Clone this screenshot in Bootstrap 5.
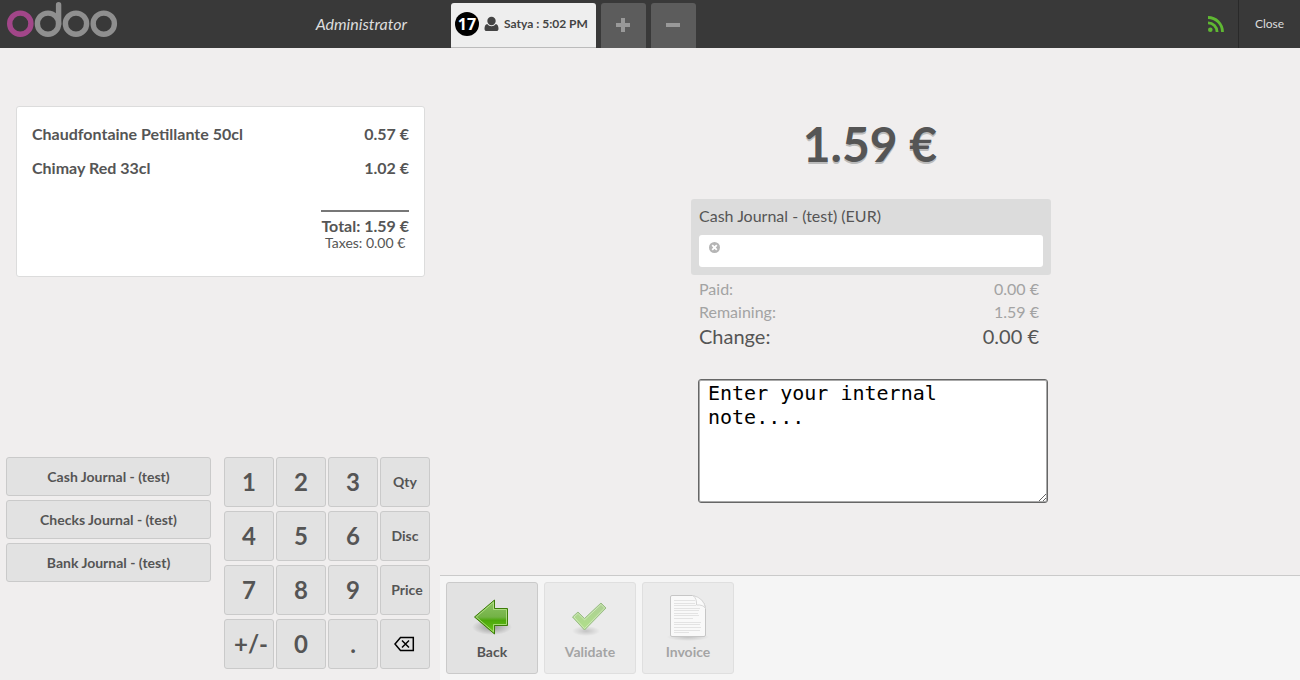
<!DOCTYPE html>
<html lang="en">
<head>
<meta charset="utf-8">
<meta name="viewport" content="width=device-width, initial-scale=1">
<title>Odoo Point of Sale</title>
<link href="https://cdn.jsdelivr.net/npm/bootstrap@5.3.0/dist/css/bootstrap.min.css" rel="stylesheet">
<style>
body { font-family: Lato, "Liberation Sans", sans-serif; font-size: 16px; line-height: 20px; color: #555; background: #f0eeee; }
.topbar { height: 48px; background: #393939; color: #eee; }
.left-col { width: 440px; }
.user-name { font-size: 16px; font-style: italic; padding-right: 33px; color: #ddd; }
.orders { padding-left: 11px; }
.order-tab { height: 45px; background: #eee; color: #444; border: 0; border-bottom: 1px solid #bbb; border-radius: 3px 3px 0 0; font-size: 12px; font-weight: 700; padding: 0 8px 2px 4px; }
.order-num { width: 24px; height: 24px; border-radius: 50%; background: #000; color: #fff; font: 700 16px/24px "Open Sans", sans-serif; text-align: center; }
.order-ctl { width: 45px; height: 45px; background: #5c5c5c; border: 0; border-radius: 3px 3px 0 0; padding: 0 0 5px; margin-left: 5px; }
.close-btn { width: 62px; height: 48px; background: none; border: 0; border-left: 1px solid #292929; color: #ddd; font-size: 12px; }
.status { margin-right: 14px; }
.receipt { margin: 58px 15px 0 16px; padding: 16px 15px 26px; background: #fff; border: 1px solid #dcdcdc; border-radius: 3px; font-weight: 700; }
.receipt-line { height: 34px; padding-top: 1px; }
.receipt-sum { border-top: 2px solid #777; margin-top: 19px; padding-top: 4px; line-height: 20px; }
.receipt-tax { font-size: 14px; font-weight: 400; line-height: 14px; }
.action-pad { padding: 0 10px 11px 6px; }
.pad-btn { background: #e2e2e2; border: 1px solid #cacaca; border-radius: 3px; color: #555; font-weight: 700; font-size: 14px; line-height: 20px; padding: 0; white-space: nowrap; }
.journals { width: 205px; }
.journals .pad-btn { height: 39px; }
.keypad { display: grid; grid-template-columns: repeat(4, 50px); column-gap: 2px; row-gap: 4px; }
.keypad .pad-btn { height: 50px; }
.keypad .digit { font-size: 24px; }
.keypad .wide-key { padding-left: 4px; }
.due { font-size: 48px; line-height: 60px; font-weight: 700; text-shadow: 0 2px 0 #bbb; padding: 66px 0 25px; }
.pay-col { width: 360px; margin-left: 251px; }
.pay-line { background: #dcdcdc; border-radius: 3px; padding: 7px 8px 8px; }
.pay-box { background: #fff; border-radius: 3px; height: 32px; margin-top: 9px; padding: 0 10px; }
.pay-box button { border: 0; background: none; padding: 7px 0 0; line-height: 0; }
.pay-box input { border: 0; outline: 0; background: none; text-align: right; }
.totals { padding: 2px 12px 0 8px; color: #a3a3a3; line-height: 23px; }
.totals .change { font-size: 20px; line-height: 26px; color: #555; }
.note { width: 350px; height: 124px; margin: 30px 0 0 7px; padding: 1px 9px; border: 1px solid #666; border-radius: 3px; box-shadow: inset 0 0 0 1px #aaa; font: 20px/24px "DejaVu Sans Mono", monospace; color: #000; background: #fff; }
.action-bar { background: #f5f5f5; border-top: 1px solid #cacaca; padding: 6px; gap: 6px; }
.action-bar .pad-btn { width: 92px; height: 92px; padding-bottom: 5px; }
.action-bar .pad-btn:disabled { opacity: .5; }
</style>
</head>
<body class="vh-100 d-flex flex-column">
<header class="topbar d-flex flex-shrink-0">
  <div class="left-col d-flex justify-content-between align-items-center flex-shrink-0">
    <svg class="align-self-start" width="120" height="44" viewBox="0 0 120 44" fill="none" stroke-width="5.4" role="img" aria-label="odoo">
      <circle cx="20.300" cy="23.700" r="10.600" stroke="#a24689"/>
      <g stroke="#8f8f8f"><circle cx="48" cy="23.700" r="10.600"/><path d="M58.600 24V4.700" stroke-linecap="round"/><circle cx="76" cy="23.700" r="10.600"/><circle cx="103.800" cy="23.700" r="10.600"/></g>
    </svg>
    <span class="user-name">Administrator</span>
  </div>
  <nav class="orders d-flex align-items-end flex-grow-1" aria-label="Orders">
    <button class="order-tab d-flex align-items-center" type="button">
      <span class="order-num">17</span>
      <svg class="mx-1" width="17" height="16" viewBox="0 0 17 16" fill="#444" aria-hidden="true"><circle cx="8.500" cy="5" r="4.200"/><path d="M4.200 8C5.500 9.500 6.800 10.200 8.500 10.200S11.500 9.500 12.800 8c1.800.3 2.700 2.100 2.700 4.700 0 1.500-.8 2.300-2.200 2.300H3.700c-1.400 0-2.200-.8-2.200-2.300C1.500 10.100 2.400 8.300 4.200 8z"/></svg>
      <span>Satya : 5:02 PM</span>
    </button>
    <button class="order-ctl" type="button" aria-label="New order"><svg width="16" height="16" viewBox="0 0 16 16" stroke="#999" stroke-width="4"><path d="M8 1v14M1 8h14"/></svg></button>
    <button class="order-ctl" type="button" aria-label="Delete order"><svg width="16" height="16" viewBox="0 0 16 16" stroke="#999" stroke-width="4"><path d="M1 8h14"/></svg></button>
  </nav>
  <div class="d-flex align-items-center">
    <svg class="status" width="16" height="16" viewBox="0 0 16 16" fill="none" stroke="#5fb832" stroke-width="2.800" role="img" aria-label="Connected"><circle cx="2.300" cy="13.700" r="2.300" fill="#5fb832" stroke="none"/><path d="M0 6.900A9.100 9.100 0 0 1 9.100 16M0 1.500A14.500 14.500 0 0 1 14.500 16"/></svg>
    <button class="close-btn" type="button">Close</button>
  </div>
</header>
<main class="d-flex flex-grow-1">
  <section class="left-col d-flex flex-column justify-content-between flex-shrink-0">
    <div class="receipt">
      <div class="receipt-line d-flex justify-content-between"><span>Chaudfontaine Petillante 50cl</span><span>0.57 €</span></div>
      <div class="receipt-line d-flex justify-content-between"><span>Chimay Red 33cl</span><span>1.02 €</span></div>
      <div class="d-flex justify-content-end"><div class="receipt-sum text-center">Total: 1.59 €<div class="receipt-tax">Taxes: 0.00 €</div></div></div>
    </div>
    <div class="action-pad d-flex justify-content-between align-items-start">
      <div class="journals d-grid gap-1">
        <button class="pad-btn" type="button">Cash Journal - (test)</button>
        <button class="pad-btn" type="button">Checks Journal - (test)</button>
        <button class="pad-btn" type="button">Bank Journal - (test)</button>
      </div>
      <div class="keypad">
        <button class="pad-btn digit" type="button">1</button><button class="pad-btn digit" type="button">2</button><button class="pad-btn digit" type="button">3</button><button class="pad-btn" type="button">Qty</button>
        <button class="pad-btn digit" type="button">4</button><button class="pad-btn digit" type="button">5</button><button class="pad-btn digit" type="button">6</button><button class="pad-btn" type="button">Disc</button>
        <button class="pad-btn digit" type="button">7</button><button class="pad-btn digit" type="button">8</button><button class="pad-btn digit" type="button">9</button><button class="pad-btn wide-key" type="button">Price</button>
        <button class="pad-btn digit wide-key" type="button">+/-</button><button class="pad-btn digit" type="button">0</button><button class="pad-btn digit" type="button">.</button>
        <button class="pad-btn" type="button" aria-label="Backspace"><svg width="22" height="20" viewBox="0 0 22 20" fill="none" stroke="#000" stroke-width="1.500"><path d="M6.500 2.500h12.800v13H6.500L1 9zM8 5.500l7 7M15 5.500l-7 7"/></svg></button>
      </div>
    </div>
  </section>
  <section class="d-flex flex-column justify-content-between flex-grow-1">
    <div>
      <div class="due text-center">1.59 €</div>
      <div class="pay-col">
        <div class="pay-line">
          <label for="cash">Cash Journal - (test) (EUR)</label>
          <div class="pay-box d-flex align-items-start">
            <button type="button" aria-label="Remove payment line"><svg width="11" height="11" viewBox="0 0 11 11"><circle cx="5.500" cy="5.500" r="5.500" fill="#b5b5b5"/><path d="M3.200 3.200l4.600 4.600M7.800 3.200L3.200 7.800" stroke="#fff" stroke-width="1.800"/></svg></button>
            <input id="cash" class="flex-grow-1 h-100" type="text">
          </div>
        </div>
        <div class="totals">
          <div class="d-flex justify-content-between"><span>Paid:</span><span>0.00 €</span></div>
          <div class="d-flex justify-content-between"><span>Remaining:</span><span>1.59 €</span></div>
          <div class="change d-flex justify-content-between"><span>Change:</span><span>0.00 €</span></div>
        </div>
        <textarea class="note d-block" aria-label="Internal note">Enter your internal note....</textarea>
      </div>
    </div>
    <div class="action-bar d-flex">
      <button class="pad-btn" type="button">
        <svg class="d-block mx-auto" width="48" height="52" viewBox="0 0 48 52" aria-hidden="true">
          <defs><linearGradient id="ga" x1="0" y1="0" x2="0" y2="1"><stop offset="0" stop-color="#8fc566"/><stop offset=".5" stop-color="#73b246"/><stop offset=".6" stop-color="#4ca80a"/><stop offset="1" stop-color="#6cc81c"/></linearGradient>
          <radialGradient id="sh"><stop offset="0" stop-color="#000" stop-opacity=".35"/><stop offset="1" stop-color="#000" stop-opacity="0"/></radialGradient></defs>
          <ellipse cx="24" cy="37" rx="20" ry="8" fill="url(#sh)"/>
          <path d="M6.500 27L26.500 10v8.500h13v17h-13V44z" fill="url(#ga)" stroke="#3c7c08"/>
          <path d="M8.300 27L25.500 12.200v7.300h13v15h-13v7.300z" fill="none" stroke="#b9e58c" stroke-opacity=".8"/>
        </svg>Back</button>
      <button class="pad-btn" type="button" disabled>
        <svg class="d-block mx-auto" width="48" height="52" viewBox="0 0 48 52" aria-hidden="true">
          <defs><linearGradient id="gb" x1="0" y1="0" x2="0" y2="1"><stop offset="0" stop-color="#68aa38"/><stop offset="1" stop-color="#6ccc20"/></linearGradient></defs>
          <ellipse cx="20" cy="41" rx="14" ry="5" fill="url(#sh)"/>
          <path d="M6.500 27l5.500-5 6.500 6.500L35 13l5 5L18.500 40z" fill="url(#gb)" stroke="#3f8518"/>
          <path d="M8 27l4-3.600 6.500 6.500L35 14.400l3.600 3.600L18.500 38.500z" fill="none" stroke="#b9e58c" stroke-opacity=".8"/>
        </svg>Validate</button>
      <button class="pad-btn" type="button" disabled>
        <svg class="d-block mx-auto" width="48" height="52" viewBox="0 0 48 52" aria-hidden="true">
          <ellipse cx="24" cy="47" rx="21" ry="4" fill="url(#sh)"/>
          <path d="M8 5.500q-1.500 0-1.500 1.500v38q0 1.500 1.500 1.500h32q1.500 0 1.500-1.500V18q-1-9-13-12.500z" fill="#fdfdfd" stroke="#999"/>
          <path d="M29 5.500q4 3 3.500 9.500 7-.5 9 3.500Q40 8 29 5.500z" fill="#fff" stroke="#bbb"/>
          <path d="M10 10.500h21M10 13.500h21M10 15.500h22M10 18.500h26M10 20.500h25M10 23.500h24M10 25.500h25M10 28.500h19M10 32.500h27M10 34.500h26M10 37.500h27M10 40.500h26M10 42.500h15" stroke="#d2d2d2"/>
        </svg>Invoice</button>
    </div>
  </section>
</main>
<script src="https://cdn.jsdelivr.net/npm/bootstrap@5.3.0/dist/js/bootstrap.bundle.min.js"></script>
</body>
</html>
